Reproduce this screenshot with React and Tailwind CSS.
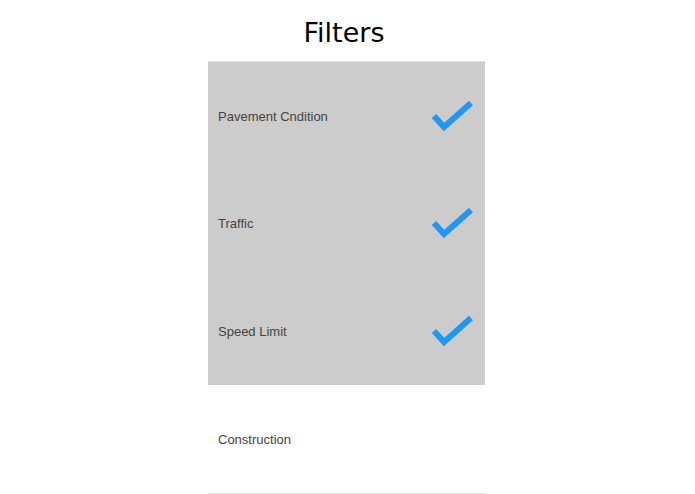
const filters = [
  { label: "Pavement Cndition", checked: true },
  { label: "Traffic", checked: true },
  { label: "Speed Limit", checked: true },
  { label: "Construction", checked: false },
];

const Check = () => (
  <svg width="44" height="36" viewBox="0 0 44 36" fill="none">
    <path
      d="M3 18 L13 29 L40 5"
      stroke="#2196f3"
      strokeWidth="6"
      strokeLinecap="butt"
      strokeLinejoin="miter"
    />
  </svg>
);

export default function App() {
  return (
    <div className="w-[695px] h-[494px] bg-white overflow-hidden">
      <div className="h-[61px] flex items-center justify-center pt-[3px] pr-[7px]">
        <h1 className="text-[27px] text-black font-['DejaVu_Sans',sans-serif] leading-none">
          Filters
        </h1>
      </div>
      <div className="w-[277px] ml-[208px] border-t border-b border-[#e2e2e2]">
        {filters.map((f, i) => (
          <div
            key={f.label}
            className={`flex items-center justify-between pl-[10px] pr-[10px] ${
              i === 0 ? "h-[107px]" : "h-[108px]"
            } ${f.checked ? "bg-[#cccccc]" : "bg-white"}`}
          >
            <span className="text-[13px] text-[#444444] font-['Liberation_Sans',Arial,sans-serif] pt-[2px]">
              {f.label}
            </span>
            {f.checked && <Check />}
          </div>
        ))}
      </div>
    </div>
  );
}
